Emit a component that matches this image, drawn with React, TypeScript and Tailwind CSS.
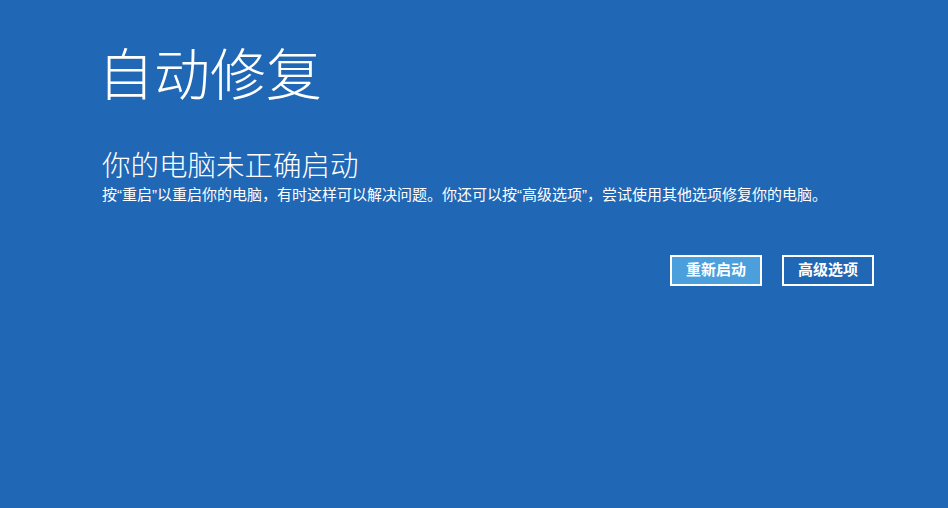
import React from 'react'

const font = '"Liberation Sans", "Noto Sans CJK SC", sans-serif'

export default function App() {
  return (
    <div
      lang="zh-CN"
      className="w-full h-screen bg-[#2067b5] text-white overflow-hidden"
      style={{ fontFamily: font }}
    >
      <div className="pl-[100px] pt-[44px] w-[874px]">
        {/* Title */}
        <h1 className="text-[56px] leading-[64px] font-light -ml-[2px]">自动修复</h1>

        {/* Message */}
        <div className="mt-[41px] pl-[2px]">
          <h2 className="text-[28.5px] leading-[34px] font-light">你的电脑未正确启动</h2>
          <p className="text-[15px] leading-[20px] mt-[2px]">
            按“重启”以重启你的电脑，有时这样可以解决问题。你还可以按“高级选项”，尝试使用其他选项修复你的电脑。
          </p>
        </div>

        {/* Buttons */}
        <div className="flex justify-end gap-[20px] mt-[50px]">
          <button className="w-[92px] h-[31px] border-2 border-white bg-[#4a9fdc] text-[15px] font-bold text-white flex items-center justify-center">
            重新启动
          </button>
          <button className="w-[92px] h-[31px] border-2 border-white bg-transparent text-[15px] font-bold text-white flex items-center justify-center">
            高级选项
          </button>
        </div>
      </div>
    </div>
  )
}
